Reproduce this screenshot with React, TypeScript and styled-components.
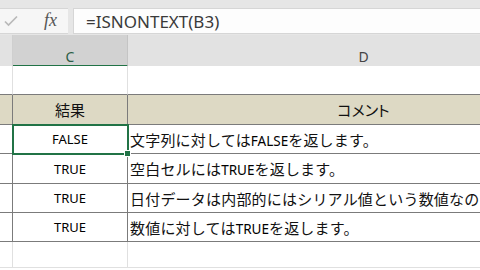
import styled, { createGlobalStyle } from "styled-components";

const GlobalStyle = createGlobalStyle`
  body {
    margin: 0;
    background: #fff;
    font-family: "Noto Sans CJK JP", sans-serif;
  }
`;

type RowData = {
  height: number;
  kind: "empty" | "beforeTable" | "head" | "body";
  result?: string;
  comment?: string;
  selected?: boolean;
};

const rows: RowData[] = [
  { height: 29, kind: "beforeTable" },
  { height: 30, kind: "head", result: "結果", comment: "コメント" },
  { height: 29, kind: "body", result: "FALSE", comment: "文字列に対してはFALSEを返します。", selected: true },
  { height: 30, kind: "body", result: "TRUE", comment: "空白セルにはTRUEを返します。" },
  { height: 29, kind: "body", result: "TRUE", comment: "日付データは内部的にはシリアル値という数値なのでTRUEを返します。" },
  { height: 29, kind: "body", result: "TRUE", comment: "数値に対してはTRUEを返します。" },
  { height: 26, kind: "empty" },
];

// 英字部分だけ細めの欧文フォントにする（Excel の Calibri 相当）
function renderComment(text?: string) {
  if (!text) return null;
  return text.split(/([A-Za-z]+)/).map((part, i) =>
    /^[A-Za-z]+$/.test(part) ? <Latin key={i}>{part}</Latin> : part
  );
}

export default function App() {
  return (
    <>
      <GlobalStyle />
      <Root>
        {/* 数式バー */}
        <FormulaBar>
          <ControlBox>
            <svg width="14" height="12" viewBox="0 0 14 12">
              <path d="M1 6.5 L4.5 10 L13 1.5" fill="none" stroke="#b9b9b9" strokeWidth="1.7" />
            </svg>
            <FxLabel>fx</FxLabel>
          </ControlBox>
          <FormulaInput>=ISNONTEXT(B3)</FormulaInput>
        </FormulaBar>

        {/* 列見出し */}
        <ColumnHeaderRow>
          <ColHeader />
          <ColHeader $active>C</ColHeader>
          <ColHeader>D</ColHeader>
        </ColumnHeaderRow>

        {/* シート */}
        {rows.map((row, i) => (
          <SheetRow key={i} $h={row.height}>
            <Cell $kind={row.kind} />
            <Cell $kind={row.kind} $center $selected={row.selected}>
              {row.kind === "head" ? <HeadText>{row.result}</HeadText> : <ResultText>{row.result}</ResultText>}
            </Cell>
            <Cell $kind={row.kind} $center={row.kind === "head"}>
              {row.kind === "head" ? (
                <HeadText $palt>{row.comment}</HeadText>
              ) : (
                <CommentText>{renderComment(row.comment)}</CommentText>
              )}
            </Cell>
          </SheetRow>
        ))}
      </Root>
    </>
  );
}

const Root = styled.div`
  width: 480px;
  height: 270px;
  overflow: hidden;
  display: flex;
  flex-direction: column;
`;

const FormulaBar = styled.div`
  flex: none;
  display: flex;
  gap: 5px;
  height: 35px;
  padding: 8px 0 1px;
  box-sizing: border-box;
  background: #e6e6e6;
`;

const ControlBox = styled.div`
  width: 68px;
  display: flex;
  align-items: center;
  gap: 26px;
  padding-left: 4px;
  box-sizing: border-box;
  background: #f6f6f6;
  border-top: 1px solid #d6d6d6;
  border-bottom: 1px solid #d6d6d6;
`;

const FxLabel = styled.span`
  font-family: "Liberation Serif", serif;
  font-style: italic;
  font-size: 18px;
  color: #555;
  margin-top: -2px;
`;

const FormulaInput = styled.div`
  flex: 1;
  display: flex;
  align-items: center;
  padding-left: 12px;
  background: #fdfdfd;
  border: 1px solid #d6d6d6;
  border-right: none;
  font-family: "Noto Sans", sans-serif;
  font-size: 17px;
  color: #3a3a3a;
`;

const ColumnHeaderRow = styled.div`
  flex: none;
  display: grid;
  grid-template-columns: 13px 115px 472px;
  height: 31px;
`;

const ColHeader = styled.div<{ $active?: boolean }>`
  display: flex;
  justify-content: center;
  align-items: flex-start;
  padding-top: 14px;
  box-sizing: border-box;
  background: ${(p) => (p.$active ? "#d2d2d2" : "#e2e2e2")};
  border-right: 1px solid ${(p) => (p.$active ? "#c4c4c4" : "#cfcfcf")};
  border-bottom: ${(p) => (p.$active ? "2px solid #217346" : "1px solid #bcbcbc")};
  font-family: "Noto Sans", sans-serif;
  font-size: 14px;
  line-height: 16px;
  color: ${(p) => (p.$active ? "#2b5d45" : "#444")};
`;

const SheetRow = styled.div<{ $h: number }>`
  flex: none;
  display: grid;
  grid-template-columns: 13px 115px 472px;
  height: ${(p) => p.$h}px;
`;

const DARK = "#7b7b7b";
const LIGHT = "#e0e0e0";

const Cell = styled.div<{ $kind: RowData["kind"]; $center?: boolean; $selected?: boolean }>`
  position: relative;
  display: flex;
  align-items: center;
  justify-content: ${(p) => (p.$center ? "center" : "flex-start")};
  padding-left: ${(p) => (p.$center ? 0 : 2)}px;
  box-sizing: border-box;
  overflow: ${(p) => (p.$selected ? "visible" : "hidden")};
  white-space: nowrap;
  background: ${(p) => (p.$kind === "head" ? "#ddd9c4" : "#fff")};
  border-right: 1px solid ${(p) => (p.$kind === "head" || p.$kind === "body" ? DARK : LIGHT)};
  border-bottom: 1px solid ${(p) => (p.$kind === "empty" ? LIGHT : DARK)};
  ${(p) =>
    p.$selected &&
    `
    z-index: 2;
    outline: 2px solid #217346;
    outline-offset: -1px;
    &::after {
      content: "";
      position: absolute;
      right: -4px;
      bottom: -4px;
      width: 5px;
      height: 5px;
      background: #217346;
      border: 1px solid #fff;
    }
  `}
`;

const HeadText = styled.span<{ $palt?: boolean }>`
  font-family: "Noto Sans CJK JP", sans-serif;
  font-size: 15px;
  color: #111;
  font-feature-settings: ${(p) => (p.$palt ? '"palt"' : "normal")};
`;

const ResultText = styled.span`
  font-family: "Noto Sans", sans-serif;
  font-size: 13px;
  color: #000;
`;

const CommentText = styled.span`
  font-family: "Noto Sans CJK JP", sans-serif;
  font-size: 15px;
  letter-spacing: 0.2px;
  color: #111;
`;

const Latin = styled.span`
  font-family: "Noto Sans", sans-serif;
  font-size: 13.5px;
  letter-spacing: 0;
  color: #000;
`;
